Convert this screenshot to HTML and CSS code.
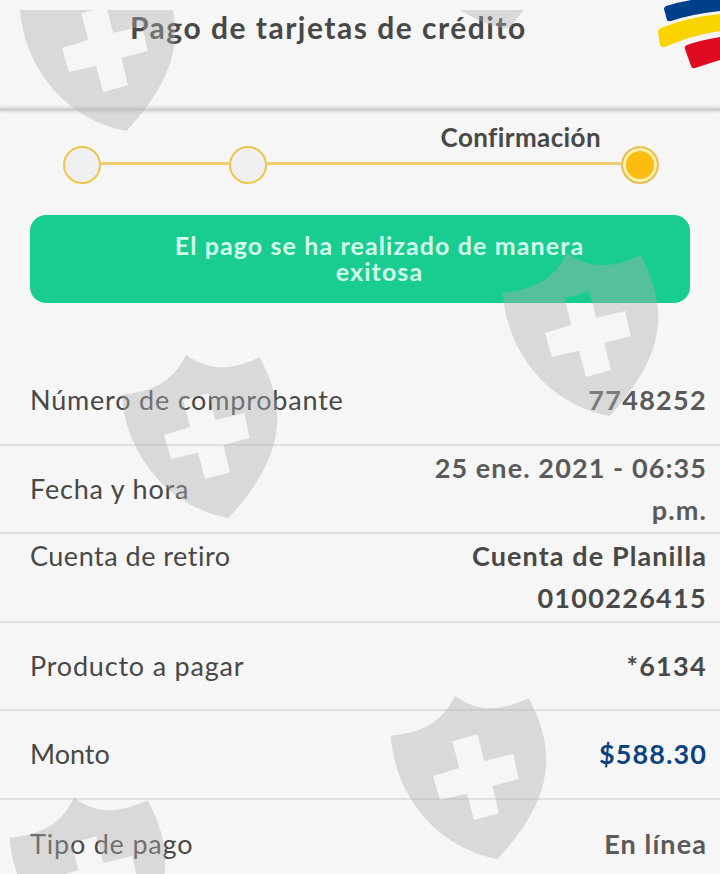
FILE: index.html
```html
<!DOCTYPE html>
<html lang="es">
<head>
  <meta charset="UTF-8">
  <meta name="viewport" content="width=device-width, initial-scale=1.0">
  <title>Pago de tarjetas de crédito</title>
  <link rel="stylesheet" href="styles.css">
</head>
<body>
  <div class="page">
    <header class="header">
      <h1 class="title">Pago de tarjetas de crédito</h1>
      <svg class="logo" width="64" height="72" viewBox="0 0 64 72">
        <path d="M10 6 Q28 0 64 -4 L64 11 Q36 14 15 21 Q12 22 11 20 L8 9 Q8 7 10 6Z" fill="#003f8a"/>
        <path d="M5 28 Q32 17 64 14 L64 31 Q33 36 9 47 Q5 48 4 45 L2 32 Q2 29 5 28Z" fill="#fad400"/>
        <path d="M31 45 Q45 40 64 37 L64 60 L39 68 Q36 69 35 66 L29 49 Q28 46 31 45Z" fill="#e00a22"/>
      </svg>
    </header>

    <div class="steps">
      <span class="step-label">Confirmación</span>
      <div class="track">
        <span class="dot"></span>
        <span class="line line-short"></span>
        <span class="dot"></span>
        <span class="line"></span>
        <span class="dot active"></span>
      </div>
    </div>

    <div class="alert">
      <div>El pago se ha realizado de manera</div>
      <div>exitosa</div>
    </div>

    <div class="details">
      <div class="row">
        <span class="label">Número de comprobante</span>
        <span class="value wide">7748252</span>
      </div>
      <div class="row">
        <span class="label">Fecha y hora</span>
        <span class="value">25 ene. 2021 - 06:35<br>p.m.</span>
      </div>
      <div class="row top">
        <span class="label retiro">Cuenta de retiro</span>
        <span class="value dark">Cuenta de Planilla<br><span class="wide">0100226415</span></span>
      </div>
      <div class="row">
        <span class="label">Producto a pagar</span>
        <span class="value dark wide">*6134</span>
      </div>
      <div class="row">
        <span class="label monto">Monto</span>
        <span class="value amount">$588.30</span>
      </div>
      <div class="row last">
        <span class="label">Tipo de pago</span>
        <span class="value">En línea</span>
      </div>
    </div>

    <!-- Marca de agua -->
    <svg class="watermark" width="720" height="864" viewBox="0 10 720 864">
      <defs>
        <path id="shield" fill-rule="evenodd" d="M.7 40.7 C34 37 52 27 65 .7 C88 17 108 17 138.8 3.3 C165 53 167 100 107.5 164 C48 153 5 102 .7 40.7Z
          M62.3 46.3 L87.3 39.3 L94.3 66 L123.3 59 L128.7 84 L102.3 91 L109 118.3 L84 125 L77 98.7 L50 105 L43 81 L69.3 73Z"/>
      </defs>
      <use href="#shield" x="19" y="-33"/>
      <use href="#shield" x="400" y="-135"/>
      <use href="#shield" x="502" y="252"/>
      <use href="#shield" x="121" y="354"/>
      <use href="#shield" x="390" y="695"/>
      <use href="#shield" x="9" y="797"/>
    </svg>
  </div>
</body>
</html>
```
FILE: styles.css
```css
* { box-sizing: border-box; }
body { font-family: Lato, "Open Sans", sans-serif; background: #f6f6f6; margin: 0; color: #484848; }
.page { position: relative; width: 720px; height: 874px; overflow: hidden; }

.header { height: 111px; display: flex; justify-content: space-between; align-items: flex-start; padding-left: 130px; border-bottom: 3px solid #d2d2d2; box-shadow: 0 0 4px rgba(0,0,0,0.18), inset 0 -3px 3px -2px rgba(0,0,0,0.12); }
.title { margin: 8px 0 0; font-size: 30px; line-height: 38px; font-weight: 700; letter-spacing: 1.5px; white-space: nowrap; }
.logo { display: block; }

.steps { height: 104px; padding: 10px 61px 0 63px; display: flex; flex-direction: column; }
.step-label { align-self: flex-end; margin-right: 58px; font-size: 26px; line-height: 32px; height: 25px; font-weight: 700; letter-spacing: 0.4px; }
.track { display: flex; align-items: center; height: 38px; }
.dot { width: 38px; height: 38px; border: 2px solid #f0c648; border-radius: 50%; background: #f0f0f3; flex: none; }
.dot.active { border-color: #e6c160; background: #fdbd10; box-shadow: inset 0 0 0 3px #fff0b0; }
.line { flex: 1; height: 3px; background: #efcd70; margin-bottom: 3px; }
.line-short { flex: 0 0 128px; }

.alert { margin: 0 30px; height: 88px; border-radius: 16px; background: #19cc8f; color: #d3ffec; padding: 17px 0 0 39px; text-align: center; font-size: 25px; line-height: 26px; font-weight: 700; letter-spacing: 1.1px; }

.details { margin-top: 54px; }
.row { height: 88.5px; padding: 0 13px 0 30px; display: flex; justify-content: space-between; align-items: center; border-bottom: 2px solid #e0e0e0; }
.row.top { align-items: flex-start; padding-top: 1px; }
.row.last { border-bottom: none; }
.label { font-size: 27px; line-height: 42px; letter-spacing: 0.8px; white-space: nowrap; }
.label.retiro { letter-spacing: 0.5px; }
.label.monto { letter-spacing: 0; }
.value { font-size: 27px; line-height: 42px; font-weight: 700; letter-spacing: 1.1px; color: #5a5a5a; text-align: right; white-space: nowrap; }
.value.dark { color: #484848; }
.value.amount { color: #0b4380; }
.wide { letter-spacing: 1.3px; }

.watermark { position: absolute; left: 0; top: 10px; fill: #b0b0b0; opacity: 0.4; pointer-events: none; }
```
